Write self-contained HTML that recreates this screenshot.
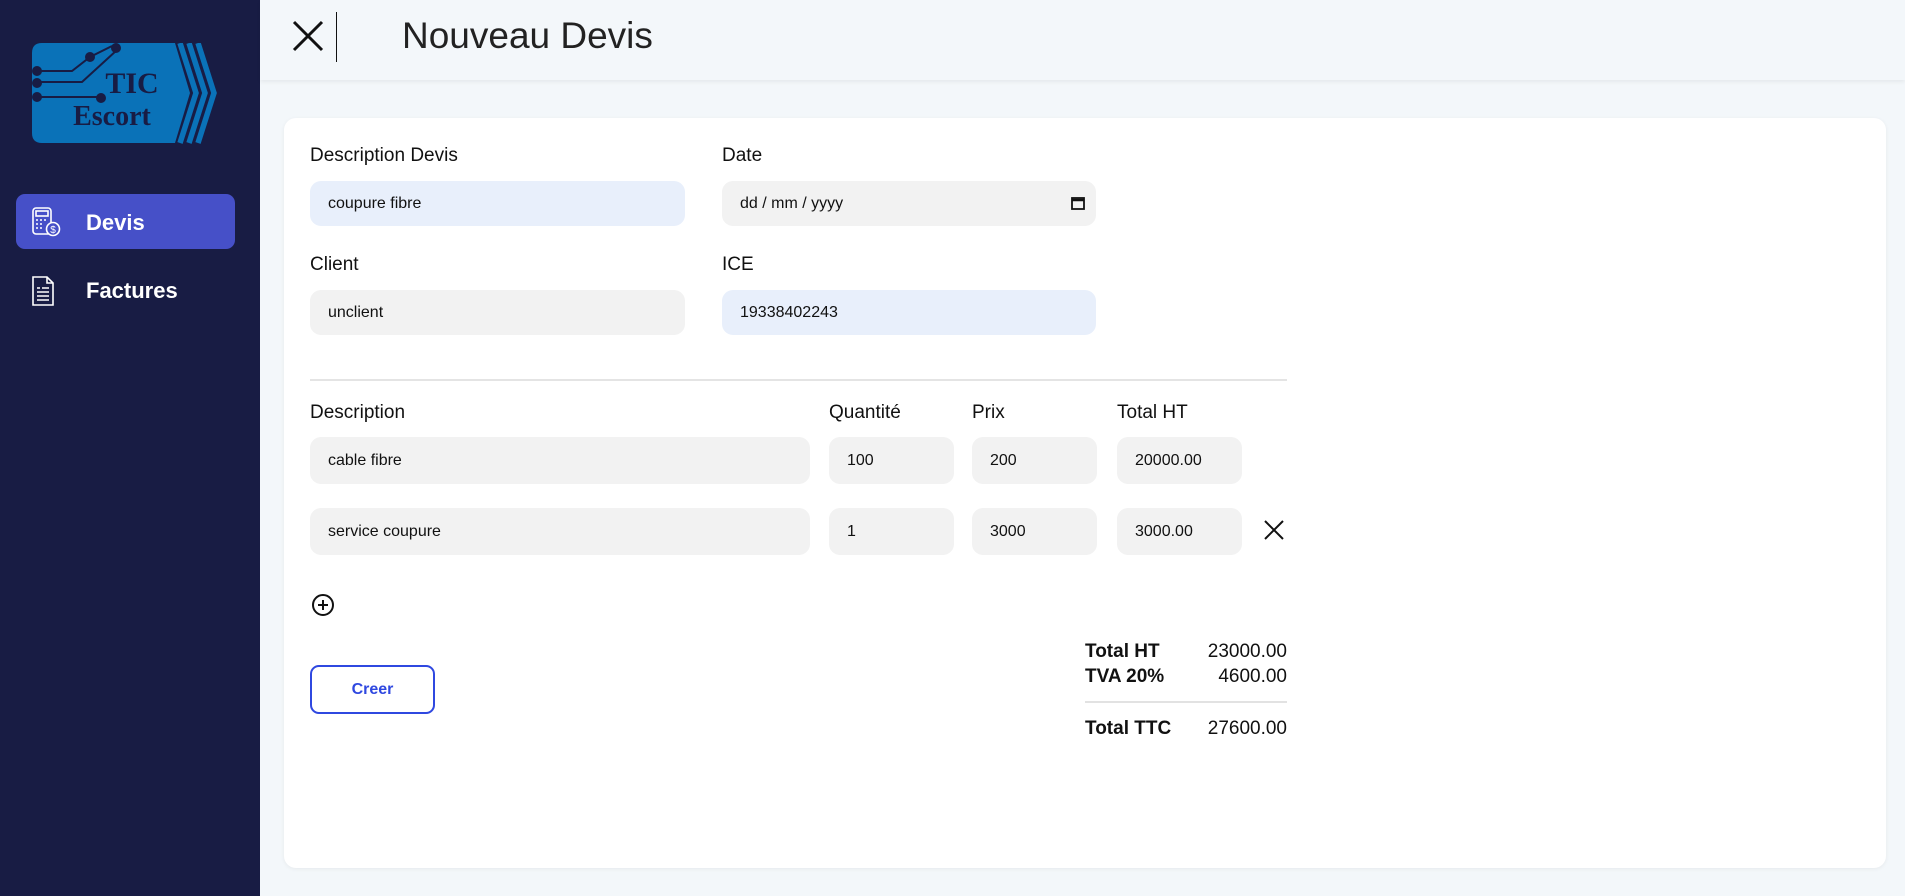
<!DOCTYPE html>
<html><head><meta charset="utf-8"><style>
*{box-sizing:border-box;margin:0;padding:0}
body{width:1905px;height:896px;background:#f3f7fa;font-family:"Liberation Sans",sans-serif;color:#111;position:relative;overflow:hidden}
.a{position:absolute}
.side{left:0;top:0;width:260px;height:896px;background:#181c44}
.hdr{left:260px;top:0;width:1645px;height:80px;background:#f3f7fa;box-shadow:0 2px 4px rgba(0,0,0,.06)}
.card{left:284px;top:118px;width:1602px;height:750px;background:#fff;border-radius:12px;box-shadow:0 1px 4px rgba(0,0,0,.06)}
.lbl{font-size:19px;color:#111}
.in{background:#f2f2f2;border-radius:11px;font-size:16px;display:flex;align-items:center;padding-left:18px;color:#111}
.blue{background:#e8effb}
.tt{font-size:19px}
</style></head><body>
<div class="a side"></div>
<svg class="a" style="left:32px;top:43px" width="187" height="101" viewBox="0 0 187 101">
<path d="M10 0 H143 L158 50 L143 100 H10 Q0 100 0 90 V10 Q0 0 10 0Z" fill="#0a72b8"/>
<path d="M148 0 L164 50 L148 100 M157 0 L173 50 L157 100 M166 0 L182 50 L166 100" stroke="#0a72b8" stroke-width="5.5" fill="none"/>
<g stroke="#181c44" stroke-width="2" fill="#181c44">
<path d="M5 28 H40 L58 14 L80 3" fill="none"/><path d="M5 39 H50 L85 7" fill="none"/><path d="M5 54 H67" fill="none"/>
<circle cx="5" cy="28" r="4"/><circle cx="5" cy="40" r="4"/><circle cx="5" cy="54" r="4"/><circle cx="58" cy="14" r="4"/><circle cx="84" cy="5" r="4"/><circle cx="69" cy="55" r="4"/>
</g>
<text x="100" y="50" font-family="Liberation Serif" font-weight="bold" font-size="30" fill="#181c44" text-anchor="middle">TIC</text>
<text x="80" y="82" font-family="Liberation Serif" font-weight="bold" font-size="28" fill="#181c44" text-anchor="middle">Escort</text>
</svg>
<div class="a" style="left:16px;top:194px;width:219px;height:55px;background:#4650c8;border-radius:9px"></div>
<svg class="a" style="left:31px;top:207px" width="30" height="30" viewBox="0 0 30 30" fill="none" stroke="#fff" stroke-width="1.6">
<rect x="2" y="1" width="18" height="26" rx="3"/><rect x="5" y="4" width="12" height="5"/>
<path d="M5 13h2M9 13h2M13 13h2M5 17h2M9 17h2M5 21h2M9 21h2"/>
<circle cx="22" cy="22" r="6.5" fill="#4650c8"/><text x="22" y="26" font-size="10" fill="#fff" stroke="none" text-anchor="middle">$</text></svg>
<div class="a" style="left:86px;top:210px;font-size:22px;color:#fff;font-weight:600">Devis</div>
<svg class="a" style="left:31px;top:275px" width="24" height="32" viewBox="0 0 24 32" fill="none" stroke="#fff" stroke-width="1.6">
<path d="M2 2h14l6 6v22H2z"/><path d="M16 2v6h6"/><path d="M6 13h3M11 13h7M6 17h12M6 21h12M6 25h12"/></svg>
<div class="a" style="left:86px;top:278px;font-size:22px;color:#fff;font-weight:600">Factures</div>
<div class="a hdr"></div>
<svg class="a" style="left:292px;top:20px" width="32" height="32" viewBox="0 0 32 32"><path d="M2 2L30 30M30 2L2 30" stroke="#111" stroke-width="3"/></svg>
<div class="a" style="left:336px;top:12px;width:1px;height:50px;background:#111"></div>
<div class="a" style="left:402px;top:15px;font-size:37px;color:#222">Nouveau Devis</div>
<div class="a card"></div>
<div class="a lbl" style="left:310px;top:145px">Description Devis</div>
<div class="a lbl" style="left:722px;top:145px">Date</div>
<div class="a in blue" style="left:310px;top:181px;width:375px;height:45px">coupure fibre</div>
<div class="a in" style="left:722px;top:181px;width:374px;height:45px">dd / mm / yyyy<svg style="position:absolute;right:10px;top:14px" width="16" height="16" viewBox="0 0 16 16"><rect x="2" y="3" width="12" height="11" fill="none" stroke="#111" stroke-width="1.8"/><path d="M2 5h12" stroke="#111" stroke-width="2.5"/></svg></div>
<div class="a lbl" style="left:310px;top:254px">Client</div>
<div class="a lbl" style="left:722px;top:254px">ICE</div>
<div class="a in" style="left:310px;top:290px;width:375px;height:45px">unclient</div>
<div class="a in blue" style="left:722px;top:290px;width:374px;height:45px">19338402243</div>
<div class="a" style="left:310px;top:379px;width:977px;height:2px;background:#e4e4e4"></div>
<div class="a lbl" style="left:310px;top:402px">Description</div>
<div class="a lbl" style="left:829px;top:402px">Quantité</div>
<div class="a lbl" style="left:972px;top:402px">Prix</div>
<div class="a lbl" style="left:1117px;top:402px">Total HT</div>
<div class="a in" style="left:310px;top:437px;width:500px;height:47px">cable fibre</div>
<div class="a in" style="left:829px;top:437px;width:125px;height:47px">100</div>
<div class="a in" style="left:972px;top:437px;width:125px;height:47px">200</div>
<div class="a in" style="left:1117px;top:437px;width:125px;height:47px">20000.00</div>
<div class="a in" style="left:310px;top:508px;width:500px;height:47px">service coupure</div>
<div class="a in" style="left:829px;top:508px;width:125px;height:47px">1</div>
<div class="a in" style="left:972px;top:508px;width:125px;height:47px">3000</div>
<div class="a in" style="left:1117px;top:508px;width:125px;height:47px">3000.00</div>
<svg class="a" style="left:1264px;top:520px" width="20" height="20" viewBox="0 0 20 20"><path d="M1 1L19 19M19 1L1 19" stroke="#111" stroke-width="2"/></svg>
<svg class="a" style="left:311px;top:593px" width="24" height="24" viewBox="0 0 24 24" fill="none" stroke="#111" stroke-width="2"><circle cx="12" cy="12" r="10"/><path d="M12 7v10M7 12h10"/></svg>
<div class="a" style="left:310px;top:665px;width:125px;height:49px;border:2.5px solid #2f48e0;border-radius:9px;color:#2f48e0;font-weight:bold;font-size:16px;display:flex;align-items:center;justify-content:center">Creer</div>
<div class="a tt" style="left:1085px;top:641px;font-weight:bold">Total HT</div>
<div class="a tt" style="left:1085px;top:666px;font-weight:bold">TVA 20%</div>
<div class="a tt" style="left:1085px;top:718px;font-weight:bold">Total TTC</div>
<div class="a tt" style="left:1150px;width:137px;text-align:right;top:641px">23000.00</div>
<div class="a tt" style="left:1150px;width:137px;text-align:right;top:666px">4600.00</div>
<div class="a tt" style="left:1150px;width:137px;text-align:right;top:718px">27600.00</div>
<div class="a" style="left:1085px;top:701px;width:202px;height:2px;background:#e2e2e2"></div>
</body></html>
